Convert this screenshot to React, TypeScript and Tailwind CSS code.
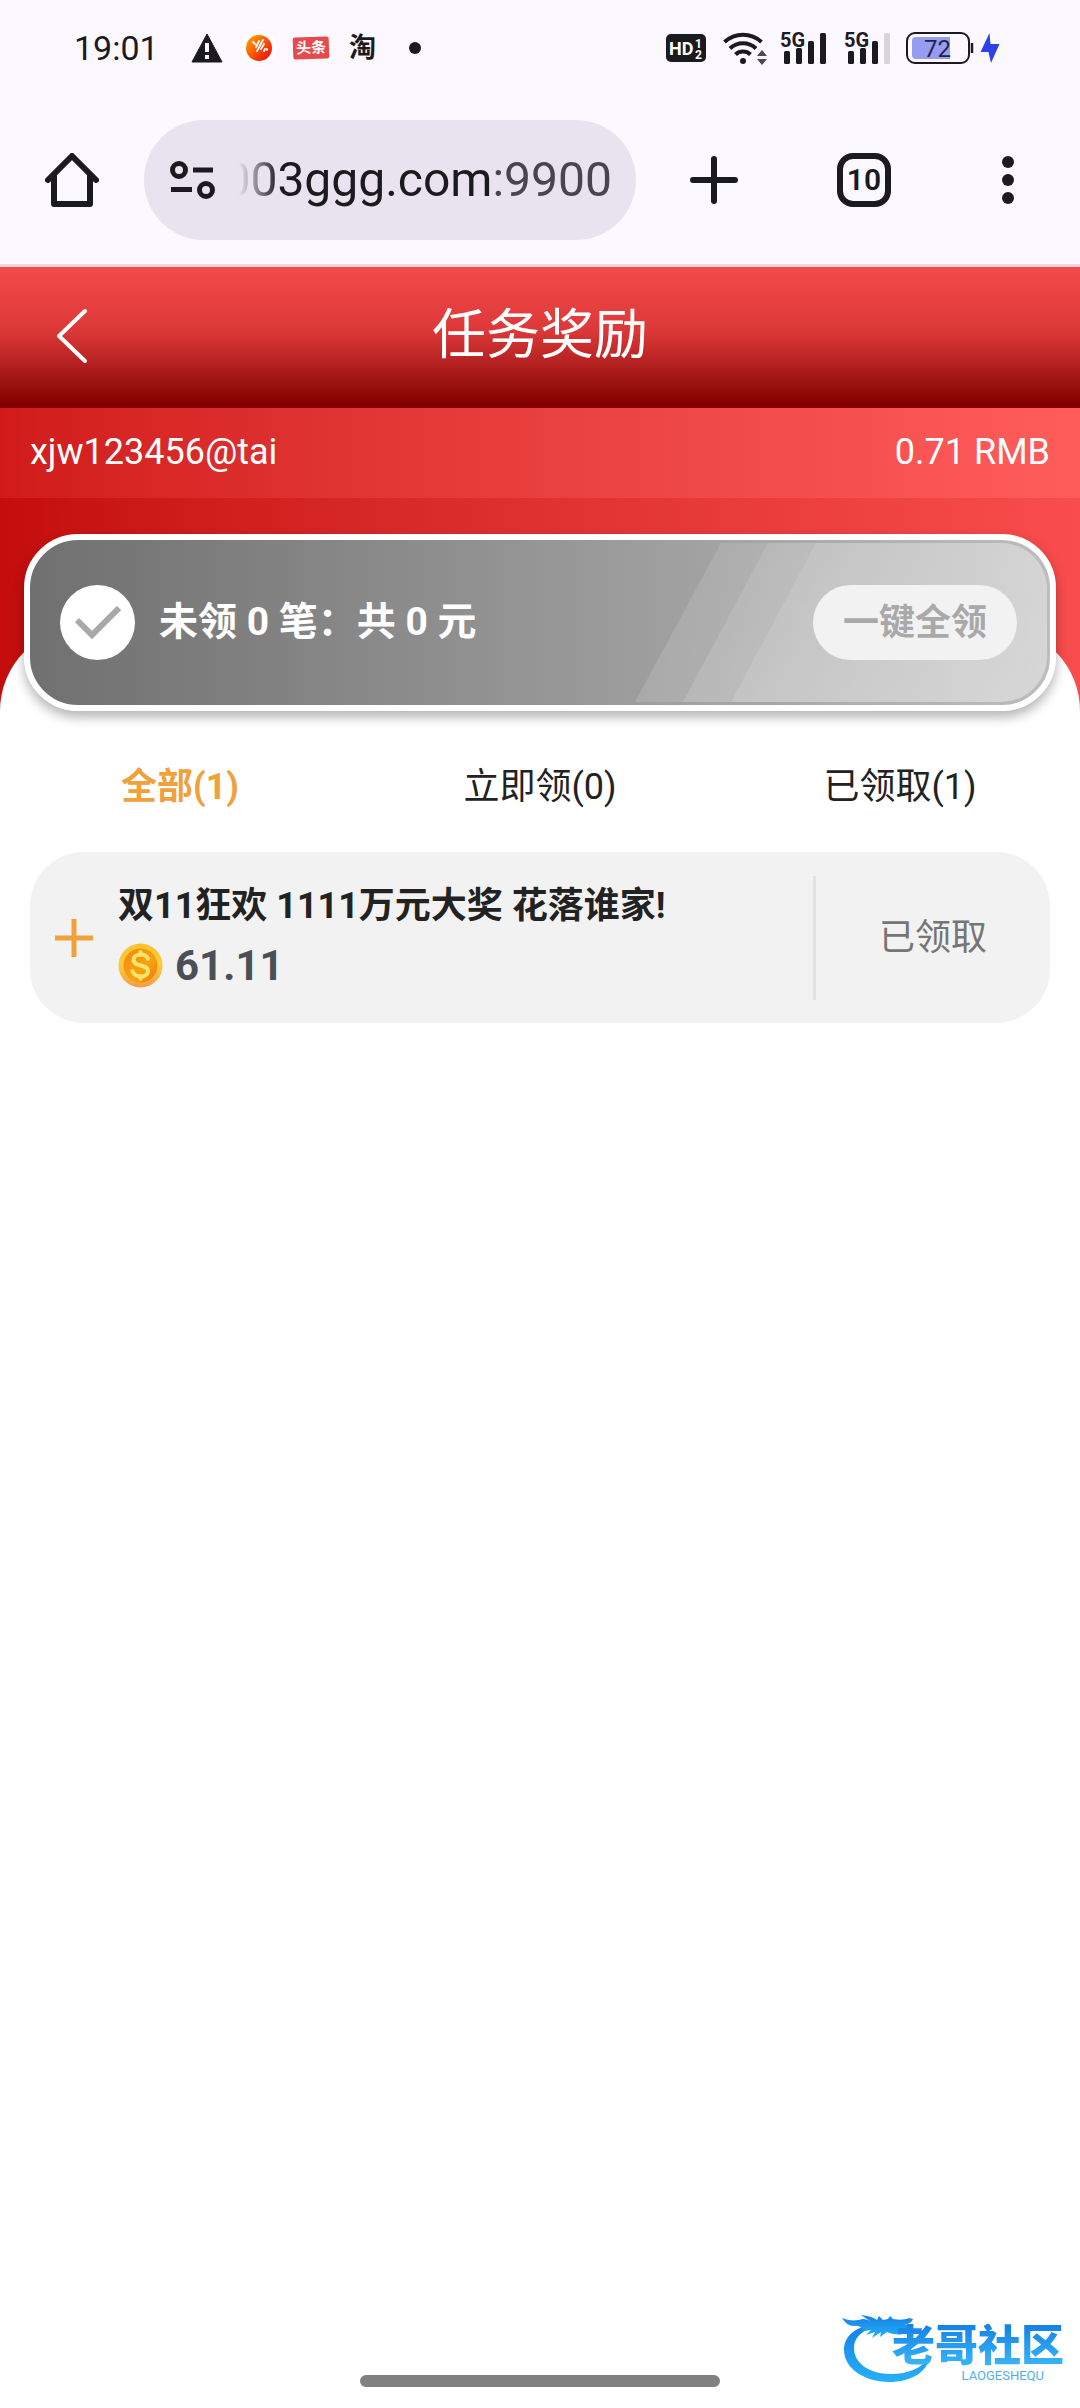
import { useState } from "react";

type Tab = { id: string; label: string; count: number };

type Reward = { id: number; title: string; amount: string; status: string };

const tabs: Tab[] = [
  { id: "all", label: "全部", count: 1 },
  { id: "pending", label: "立即领", count: 0 },
  { id: "claimed", label: "已领取", count: 1 },
];

const rewards: Reward[] = [
  { id: 1, title: "双11狂欢 1111万元大奖 花落谁家!", amount: "61.11", status: "已领取" },
];

function Signal({ weak = false }: { weak?: boolean }) {
  return (
    <svg width="48" height="44" viewBox="0 -4 48 44" fill="#1b1a1f" aria-label="5G">
      <text x="0" y="17" fontSize="20" fontWeight="700">
        5G
      </text>
      <rect x="4" y="21" width="6" height="13" rx="1.5" />
      <rect x="16" y="18" width="6" height="16" rx="1.5" />
      <rect x="28" y="11" width="6" height="23" rx="1.5" />
      <rect x="40" y="3" width="6" height="31" rx="1.5" fill={weak ? "#d8d3dc" : "#1b1a1f"} />
    </svg>
  );
}

function StatusBar() {
  return (
    <div className="flex h-24 items-center justify-between pr-20 pl-[74px] text-[#1b1a1f]">
      <div className="flex items-center">
        <span className="w-[117px] text-[34px]">19:01</span>
        <svg width="32" height="30" viewBox="0 0 32 30">
          <path d="M16 1 31 29H1Z" fill="#1b1a1f" stroke="#1b1a1f" strokeLinejoin="round" />
          <path d="M14 10h4v9h-4zM14 22h4v4h-4z" fill="#fcf8ff" />
        </svg>
        <svg className="ml-3.5" width="44" height="44" viewBox="0 0 44 44">
          <defs>
            <linearGradient id="ball" x1="0" y1="0" x2="1" y2="1">
              <stop offset="0.2" stopColor="#ff8a00" />
              <stop offset="0.9" stopColor="#f00f0f" />
            </linearGradient>
          </defs>
          <circle cx="22" cy="22" r="17" fill="#fff" />
          <circle cx="22" cy="22" r="13" fill="url(#ball)" />
          <path
            d="m16 16 2 2M19 21l3-6M20 25l6-11M24 23l3-5M27 25l1-2M30 23v1"
            fill="none"
            stroke="#fff"
            strokeWidth="1.8"
            strokeLinecap="round"
          />
        </svg>
        <span className="ml-3 flex h-[22px] w-9 -rotate-2 items-center justify-center rounded-[2px] bg-[#e84a4c] text-[15px] font-bold text-white">
          头条
        </span>
        <span className="ml-5 w-7 text-[27px] leading-none font-bold">淘</span>
        <span className="ml-8 size-3 rounded-full bg-[#1b1a1f]" />
      </div>
      <div className="flex items-center">
        <svg width="40" height="28" viewBox="0 0 40 28" fill="#fff" fontWeight="700">
          <rect width="40" height="28" rx="5" fill="#1b1a1f" />
          <text x="3" y="21" fontSize="18">
            HD
          </text>
          <text x="29" y="14" fontSize="12">
            1
          </text>
          <text x="29" y="25" fontSize="12">
            2
          </text>
        </svg>
        <svg className="ml-4" width="46" height="36" viewBox="0 0 46 36">
          <g fill="none" stroke="#1b1a1f" strokeWidth="4">
            <path d="M2.5 12a27 27 0 0 1 37 0" />
            <path d="M8 18.5a19 19 0 0 1 26 0" />
            <path d="M13.5 24.5a11 11 0 0 1 15 0" />
          </g>
          <circle cx="21" cy="31" r="3" fill="#1b1a1f" />
          <path d="m40 20 5 6H35zM40 35l5-6H35z" fill="#4b4852" />
        </svg>
        <span className="ml-3">
          <Signal />
        </span>
        <span className="ml-4">
          <Signal weak />
        </span>
        <svg className="ml-3.5" width="68" height="32" viewBox="0 0 68 32">
          <rect x="1" y="1" width="62" height="30" rx="8" fill="none" stroke="#1b1a1f" strokeWidth="2" />
          <path d="M10 5h34v22H10a4 4 0 0 1-4-4V9a4 4 0 0 1 4-4z" fill="#959cf1" />
          <path d="M66 11v10" stroke="#1b1a1f" strokeWidth="2.5" />
          <text x="18" y="25" fontSize="24" fill="#25254a">
            72
          </text>
        </svg>
        <svg className="ml-1.5" width="20" height="32" viewBox="0 0 20 32">
          <path d="M9.5 1 0.5 20h8L11 31l8.5-19h-9z" fill="#2f42e6" />
        </svg>
      </div>
    </div>
  );
}

function BrowserBar() {
  return (
    <div className="flex h-[168px] items-center text-[#1b1a1f]">
      <button type="button" aria-label="主页" className="flex w-36 shrink-0 justify-center">
        <svg width="54" height="54" viewBox="0 0 54 54" fill="none" stroke="currentColor" strokeWidth="6">
          <path d="M3 27 27 3l24 24" strokeLinecap="round" strokeLinejoin="round" />
          <path d="M9 22v29h36V22" strokeLinejoin="round" />
        </svg>
      </button>
      <button
        type="button"
        className="flex h-[120px] min-w-0 flex-1 items-center rounded-full bg-[#e9e3f0] pr-6 pl-[26px]"
      >
        <svg
          className="shrink-0"
          width="45"
          height="38"
          viewBox="0 0 45 38"
          fill="none"
          stroke="currentColor"
          strokeWidth="5"
        >
          <circle cx="9" cy="9" r="6.5" />
          <path d="M23 9h20M1 28.5h21" />
          <circle cx="36" cy="29" r="6.5" />
        </svg>
        {/* the end of the address stays visible, the start fades out */}
        <span className="ml-6 flex min-w-0 flex-1 justify-end overflow-hidden text-5xl leading-[60px] whitespace-nowrap [mask-image:linear-gradient(to_right,transparent,black_40px)]">
          <span>
            003ggg.com<span className="text-[#49454f]">:9900</span>
          </span>
        </span>
      </button>
      <button type="button" aria-label="新标签页" className="flex w-[156px] shrink-0 justify-center">
        <svg width="48" height="48" viewBox="0 0 48 48" stroke="currentColor" strokeWidth="6" strokeLinecap="round">
          <path d="M24 3v42M3 24h42" />
        </svg>
      </button>
      <button type="button" aria-label="切换标签页" className="flex w-36 shrink-0 justify-center">
        <span className="flex size-[54px] items-center justify-center rounded-2xl border-6 border-current text-[30px] leading-none font-semibold">
          10
        </span>
      </button>
      <button type="button" aria-label="更多" className="flex w-36 shrink-0 flex-col items-center gap-1.5">
        <span className="size-3 rounded-full bg-current" />
        <span className="size-3 rounded-full bg-current" />
        <span className="size-3 rounded-full bg-current" />
      </button>
    </div>
  );
}

function PageHeader() {
  return (
    <header className="grid h-[144px] grid-cols-[144px_1fr_144px] items-center border-t-3 border-[#f3d3d9] bg-linear-to-b from-[#f34949] via-[#dd3838] via-45% to-[#840000] to-97% pb-1 text-white">
      <button type="button" aria-label="返回" className="pl-14">
        <svg width="32" height="56" viewBox="0 0 32 56" fill="none" stroke="currentColor" strokeWidth="4">
          <path d="M29 3 3 28l26 25" strokeLinecap="round" strokeLinejoin="round" />
        </svg>
      </button>
      <h1 className="text-center text-[54px] leading-none">任务奖励</h1>
    </header>
  );
}

function ClaimBar() {
  return (
    <section className="relative flex h-[177px] items-center overflow-hidden rounded-[54px] border-6 border-white bg-linear-to-r from-[#707070] to-[#bdbdbd] px-[30px] shadow-[0_6px_12px_rgba(0,0,0,0.3)]">
      <svg
        className="absolute top-[3px] right-[3px] bottom-[3px]"
        width="412"
        height="159"
        viewBox="0 0 412 159"
      >
        <clipPath id="sheen">
          <path d="M0 0h366a46 46 0 0 1 46 46v67a46 46 0 0 1-46 46H0z" />
        </clipPath>
        <linearGradient id="fade" x1="0" y1="0" x2="1" y2="1">
          <stop offset="0" stopColor="#fff" stopOpacity="0.1" />
          <stop offset="1" stopColor="#fff" stopOpacity="0.16" />
        </linearGradient>
        <g clipPath="url(#sheen)" fill="url(#fade)">
          <path d="M86 0h326v159H0z" />
          <path d="M133 0h279v159H48z" />
          <path d="M181 0h231v159H96z" />
        </g>
      </svg>
      <span className="flex size-[75px] shrink-0 items-center justify-center rounded-full bg-white">
        <svg width="46" height="34" viewBox="0 0 46 34" fill="none" stroke="#a8a8a8" strokeWidth="6">
          <path d="M2 14 17 29 44 2" />
        </svg>
      </span>
      <p className="ml-6 flex-1 text-[39px] font-bold text-white">未领 0 笔：共 0 元</p>
      <button
        type="button"
        className="relative mr-[3px] h-[75px] w-[204px] rounded-full bg-[#f2f2f2] text-4xl font-bold text-[#a9a9a9]"
      >
        一键全领
      </button>
    </section>
  );
}

function Coin() {
  return (
    <svg width="45" height="45" viewBox="0 0 45 45">
      <defs>
        <linearGradient id="rim" x1="0" y1="0" x2="0" y2="1">
          <stop offset="0" stopColor="#fbc22d" />
          <stop offset="0.5" stopColor="#fccb3a" />
          <stop offset="1" stopColor="#f59a45" />
        </linearGradient>
        <linearGradient id="face" x1="0" y1="0" x2="1" y2="1">
          <stop offset="0" stopColor="#f08c12" />
          <stop offset="0.6" stopColor="#fba010" />
          <stop offset="1" stopColor="#e97412" />
        </linearGradient>
      </defs>
      <circle cx="22.5" cy="22.5" r="22" fill="url(#rim)" />
      <circle cx="22.5" cy="22.5" r="17" fill="url(#face)" />
      <path
        d="M30 16c-1-3-4-4.5-7.5-4.5s-7 2-7 5.500c0 7 14.500 4 14.500 11 0 4-4 5.500-7.500 5.500s-7-2-8-5.500M22.500 9v3M22.500 33v3"
        fill="none"
        stroke="#fde667"
        strokeWidth="4"
        strokeLinecap="round"
      />
    </svg>
  );
}

function RewardCard({ reward }: { reward: Reward }) {
  return (
    <li className="flex h-[171px] items-center rounded-[54px] bg-[#f2f2f2]">
      <button type="button" aria-label="展开" className="flex w-[88px] shrink-0 justify-center text-[#f0a13c]">
        <svg width="38" height="38" viewBox="0 0 38 38" stroke="currentColor" strokeWidth="5">
          <path d="M19 0v38M0 19h38" />
        </svg>
      </button>
      <div className="min-w-0 flex-1 pb-1">
        <h2 className="truncate text-4xl leading-[54px] font-bold text-[#222]">{reward.title}</h2>
        <div className="mt-1.5 flex items-center gap-3 text-[42px] leading-[54px] font-bold text-[#4b4f58]">
          <Coin />
          {reward.amount}
        </div>
      </div>
      <div className="flex h-[124px] w-[237px] shrink-0 items-center justify-center border-l-3 border-[#e2e2e2] text-4xl text-[#757575]">
        {reward.status}
      </div>
    </li>
  );
}

function Watermark() {
  return (
    <div className="absolute right-4 bottom-6 flex items-end">
      <svg className="-mr-[39px]" width="90" height="70" viewBox="0 0 90 70">
        <linearGradient id="dragon" x1="0" y1="0" x2="0" y2="1">
          <stop offset="0" stopColor="#1480e6" />
          <stop offset="1" stopColor="#27b0fa" />
        </linearGradient>
        <g fill="url(#dragon)">
          <path d="M32 11C14 13 3 22 3 36c0 18 20 32 45 32 22 0 38-10 41-25-8 11-22 17-39 17-22 0-37-11-37-26 0-9 6-16 17-20z" />
          <path d="M1 4c7 3 14 3 21 1 3 0 5 1 7 2l-9-6c7 1 12 2 16 5l2-4 4 4 5-1 2-3 3 3c6 1 12 1 16-1l4 1c-1 3-4 5-8 5l8 3c-3 3-8 3-13 2l6 4c-7 3-14 1-19-1l-7 5 1-5-9 6 3-6-9 3 5-5-7 1c-2-4-6-6-10-5-5 0-9-3-12-8z" />
        </g>
      </svg>
      <div className="relative">
        <div className="bg-linear-to-b from-[#1480e6] to-[#3cb8f8] bg-clip-text text-[43px] leading-[44px] font-black text-transparent">
          老哥社区
        </div>
        <div className="pr-5 text-right text-[13px] leading-4 text-[#4fb0ee]">LAOGESHEQU</div>
      </div>
    </div>
  );
}

export default function App() {
  const [active, setActive] = useState("all");

  return (
    <div className="relative flex min-h-screen flex-col bg-white font-[Roboto,'Noto_Sans_CJK_SC',sans-serif]">
      <div className="bg-[#fcf8ff]">
        <StatusBar />
        <BrowserBar />
      </div>
      <PageHeader />
      <div className="flex h-[90px] items-center justify-between bg-linear-to-r from-[#d11b1b] to-[#ff5c5c] px-[30px] pb-0.5 text-4xl text-white">
        <span>xjw123456@tai</span>
        <span>0.71 RMB</span>
      </div>
      <div className="bg-linear-to-r from-[#c40c0c] to-[#f94c4c] pt-[129px]">
        <div className="h-[84px] rounded-t-[84px] bg-white" />
      </div>
      <main className="-mt-[177px] flex-1">
        <div className="px-6">
          <ClaimBar />
        </div>
        <div role="tablist" className="flex h-[141px] pt-2.5">
          {tabs.map((tab) => (
            <button
              key={tab.id}
              type="button"
              role="tab"
              aria-selected={tab.id === active}
              onClick={() => setActive(tab.id)}
              className={`flex-1 text-4xl ${tab.id === active ? "font-bold text-[#f0a13c]" : "text-[#222]"}`}
            >
              {tab.label}({tab.count})
            </button>
          ))}
        </div>
        <ul className="px-[30px]">
          {rewards.map((reward) => (
            <RewardCard key={reward.id} reward={reward} />
          ))}
        </ul>
      </main>
      <div className="mx-auto mb-[21px] h-3 w-1/3 rounded-full bg-[#808080]" />
      <Watermark />
    </div>
  );
}
